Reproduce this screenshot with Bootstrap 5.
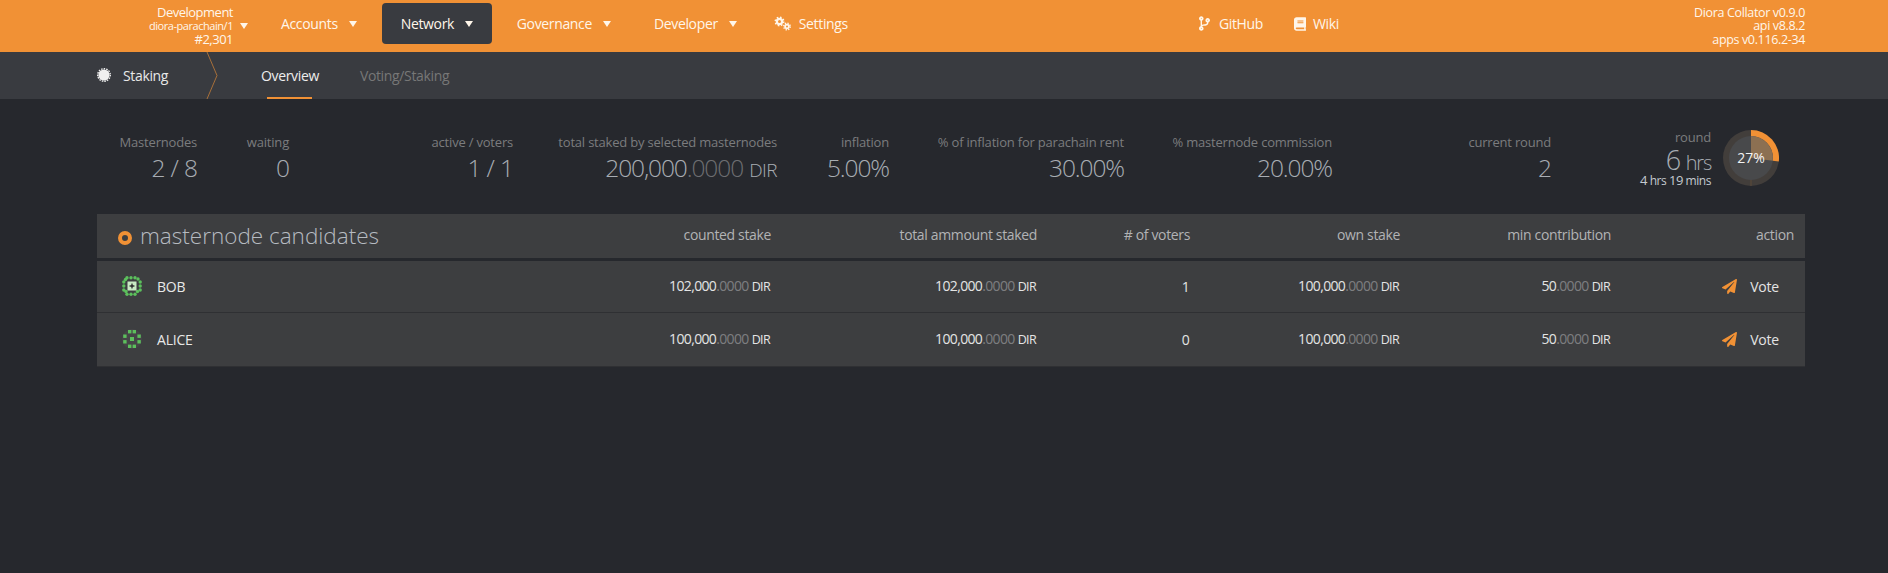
<!DOCTYPE html>
<html lang="en">
<head>
<meta charset="utf-8">
<title>Staking</title>
<link href="https://cdn.jsdelivr.net/npm/bootstrap@5.3.0/dist/css/bootstrap.min.css" rel="stylesheet">
<style>
html,body{height:573px;overflow:hidden}
body{background:#26282d;font-family:"Open Sans","Noto Sans",sans-serif;font-size:14px;color:#ddd}
.top-bar{height:52px;background:#f19135;color:#fff6ea;padding:0;flex-wrap:nowrap;justify-content:flex-start}
.chain-box{width:248px;text-align:right;line-height:13.5px;font-size:13px;letter-spacing:-.5px;padding-right:7px;flex:none}
.chain-box>div{padding-right:8px}
.chain-box .chain-mid{font-size:11px;display:flex;justify-content:flex-end;align-items:center;gap:7px;margin-right:-7px;padding-right:0;letter-spacing:-.45px}
.caret-mark{display:inline-block;border-left:4.5px solid transparent;border-right:4.5px solid transparent;border-top:6px solid currentColor;flex:none}
.menu-row{gap:0;flex:none;margin-bottom:5px}
.menu-item{height:41px;display:flex;align-items:center;color:#fff6ea;text-decoration:none;font-size:14px;letter-spacing:-.35px;border-radius:4px;white-space:nowrap}
.menu-item:hover{color:#fff}
.menu-item .caret-mark{margin-left:11px}
.m-acc{margin-left:33px;margin-right:25px}
.m-net{background:#393b40;padding:0 19px;margin-right:25px;width:110px}
.m-gov{margin-right:43px}
.m-dev{margin-right:37px}
.m-set{gap:7px}
.m-git{margin-left:351px;gap:9px}
.m-wiki{margin-left:31px;gap:7px}
.ver-box{margin-left:auto;margin-right:83px;text-align:right;font-size:12.5px;letter-spacing:-.35px;line-height:13.5px}
.sub-bar{height:47px;background:#393b40;padding-left:97px;align-items:center}
.sub-title{width:109px;gap:12px;color:#e8e8e8;font-size:14px;letter-spacing:-.35px;padding-bottom:1px}
.sub-arrow{width:12px;height:47px;flex:none}
.sub-tab{color:#777;text-decoration:none;font-size:14px;letter-spacing:-.35px;height:47px;display:flex;align-items:center;position:relative;white-space:nowrap;padding-bottom:1px}
.tab-on{color:#eee;margin-left:43px;margin-right:41px}
.tab-on::after{content:"";position:absolute;left:6px;right:7px;bottom:0;height:2px;background:#f19135}
.main-wrap{padding:0 83px 0 97px}
.stat-row{padding-top:34px;height:115px;align-items:flex-start}
.stat-box{text-align:right;flex:none;white-space:nowrap}
.stat-label{font-size:13px;letter-spacing:-.2px;color:#7b7c7e;line-height:18px}
.stat-val{font-size:24.5px;letter-spacing:-1.1px;word-spacing:1px;font-weight:300;color:#a8adb3;line-height:34px}
.stat-val small{font-size:19px;letter-spacing:-.6px;font-weight:300;color:#a8adb3}
.dim{color:#6d6e71}
.w1{width:100px}.w2{width:92px}.w3{width:224px}.w4{width:264px}.w5{width:112px}.w6{width:235px}.w7{width:208px}.w8{width:219px}.w9{width:160px}
.round-box{margin-top:-5px}
.round-box .stat-label{margin-bottom:3px}
.round-val{font-size:27px;letter-spacing:-1.2px;font-weight:300;color:#a8adb3;line-height:22px}
.round-val small{font-size:20px;font-weight:300}
.round-sub{font-size:12px;letter-spacing:-.45px;color:#c4cad0;line-height:11px;margin-top:1px}
.round-sub b{font-size:13px;font-weight:400}
.round-chart{width:56px;height:56px;margin-left:12px;margin-top:-3px;flex:none}
.stake-table{--bs-table-bg:#3d3e40;--bs-table-color:#e4e4e4;--bs-table-border-color:#2f3033;margin:0;width:1708px;table-layout:fixed;font-size:14px;letter-spacing:-.65px;border-color:#2f3033}
.stake-table th,.stake-table td{text-align:right;white-space:nowrap;vertical-align:middle;padding:0;box-shadow:none}
.stake-table thead th{height:45px;font-weight:400;color:#b2b3b5;font-size:14px;letter-spacing:-.35px;border-bottom:3px solid #26282d;padding-bottom:2px}
.stake-table tbody td{height:53px;border-bottom:1px solid #2f3033;padding-right:1px}
.stake-table tbody tr:last-child td{height:54px}
.stake-table th:last-child,.stake-table td:last-child{padding-right:11px}
.stake-table thead .cell-title{text-align:left;padding-left:21px;padding-bottom:0;font-size:22.5px;letter-spacing:0;font-weight:300;color:#b6bbc1}
.stake-table .dim{color:#7d7e80}
.stake-table .cell-name{text-align:left;padding-left:25px;letter-spacing:-.2px}
.title-dot{display:inline-block;width:14px;height:14px;border:4px solid #f19135;background:#3d3e40;border-radius:50%;margin-right:8px;vertical-align:-1px}
.name-wrap{gap:15px;color:#e8e8e8}
.dir-unit{font-size:12.5px}
.vote-wrap{gap:13px;justify-content:flex-end;padding-right:15px;letter-spacing:-.2px;color:#e4e4e4}
.stake-table col:nth-child(1){width:400px}
.stake-table col:nth-child(2){width:274px}
.stake-table col:nth-child(3){width:266px}
.stake-table col:nth-child(4){width:153px}
.stake-table col:nth-child(5){width:210px}
.stake-table col:nth-child(6){width:211px}
.stake-table col:nth-child(7){width:194px}
</style>
</head>
<body>
<nav class="navbar top-bar d-flex align-items-center">
  <div class="chain-box">
    <div>Development</div>
    <div class="chain-mid"><span>diora-parachain/1</span><span class="caret-mark"></span></div>
    <div>#2,301</div>
  </div>
  <div class="d-flex align-items-center menu-row">
    <a class="menu-item m-acc" href="#">Accounts<span class="caret-mark"></span></a>
    <a class="menu-item m-net" href="#">Network<span class="caret-mark"></span></a>
    <a class="menu-item m-gov" href="#">Governance<span class="caret-mark"></span></a>
    <a class="menu-item m-dev" href="#">Developer<span class="caret-mark"></span></a>
    <a class="menu-item m-set" href="#"><svg width="18" height="15" viewBox="0 0 18 15"><g fill="none" stroke="currentColor"><circle cx="5.5" cy="5.5" r="2.6" stroke-width="2.2"/><circle cx="5.5" cy="5.5" r="4.2" stroke-width="1.6" stroke-dasharray="1.6 1.7"/><circle cx="13" cy="10.5" r="1.9" stroke-width="1.8"/><circle cx="13" cy="10.5" r="3.3" stroke-width="1.4" stroke-dasharray="1.3 1.3"/></g></svg>Settings</a>
    <a class="menu-item m-git" href="#"><svg width="11" height="15" viewBox="0 0 384 512"><path fill="currentColor" d="M384 144c0-44.2-35.8-80-80-80s-80 35.8-80 80c0 36.4 24.3 67.1 57.5 76.8-.6 16.1-4.2 28.5-11 36.9-15.4 19.2-49.3 22.4-85.2 25.7-28.2 2.6-57.4 5.4-81.3 16.9v-144c32.5-10.2 56-40.5 56-76.3 0-44.2-35.8-80-80-80S0 35.8 0 80c0 35.8 23.5 66.1 56 76.3v199.3C23.5 365.9 0 396.2 0 432c0 44.2 35.8 80 80 80s80-35.8 80-80c0-34-21.2-63.1-51.2-74.6 3.1-5.2 7.8-9.8 14.9-13.4 16.2-8.2 40.4-10.4 66.1-12.8 42.2-3.9 90-8.4 118.2-43.4 14-17.4 21.1-39.8 21.6-67.9 31.6-10.8 54.4-40.7 54.4-75.9zM80 64c8.8 0 16 7.2 16 16s-7.2 16-16 16-16-7.2-16-16 7.2-16 16-16zm0 384c-8.8 0-16-7.2-16-16s7.2-16 16-16 16 7.2 16 16-7.2 16-16 16zm224-320c8.8 0 16 7.2 16 16s-7.2 16-16 16-16-7.2-16-16 7.2-16 16-16z"/></svg>GitHub</a>
    <a class="menu-item m-wiki" href="#"><svg width="12" height="14" viewBox="0 0 448 512"><path fill="currentColor" d="M448 360V24c0-13.3-10.7-24-24-24H96C43 0 0 43 0 96v320c0 53 43 96 96 96h328c13.3 0 24-10.7 24-24v-16c0-7.5-3.5-14.3-8.9-18.7-4.2-15.4-4.2-59.3 0-74.7 5.4-4.3 8.9-11.1 8.9-18.6zM128 134c0-3.3 2.7-6 6-6h212c3.3 0 6 2.7 6 6v20c0 3.3-2.7 6-6 6H134c-3.3 0-6-2.7-6-6v-20zm0 64c0-3.3 2.7-6 6-6h212c3.3 0 6 2.7 6 6v20c0 3.3-2.7 6-6 6H134c-3.3 0-6-2.7-6-6v-20zm253.4 250H96c-17.7 0-32-14.3-32-32 0-17.6 14.4-32 32-32h285.4c-1.9 17.1-1.9 46.9 0 64z"/></svg>Wiki</a>
  </div>
  <div class="ver-box">
    <div>Diora Collator v0.9.0</div>
    <div>api v8.8.2</div>
    <div>apps v0.116.2-34</div>
  </div>
</nav>
<div class="sub-bar d-flex">
  <div class="sub-title d-flex align-items-center"><svg width="14" height="14" viewBox="0 0 14 14"><circle cx="7" cy="7" r="5.6" fill="#f0f0f0"/><circle cx="7" cy="7" r="6.3" fill="none" stroke="#f0f0f0" stroke-width="1.4" stroke-dasharray="1.5 1.1"/></svg><span>Staking</span></div>
  <svg class="sub-arrow" viewBox="0 0 12 47"><path d="M1 0 L11 23.5 L1 47" fill="none" stroke="#a8703a" stroke-width="1"/></svg>
  <a class="sub-tab tab-on" href="#">Overview</a>
  <a class="sub-tab" href="#">Voting/Staking</a>
</div>
<div class="main-wrap">
  <div class="stat-row d-flex">
    <div class="stat-box w1"><div class="stat-label">Masternodes</div><div class="stat-val">2 / 8</div></div>
    <div class="stat-box w2"><div class="stat-label">waiting</div><div class="stat-val">0</div></div>
    <div class="stat-box w3"><div class="stat-label">active / voters</div><div class="stat-val">1 / 1</div></div>
    <div class="stat-box w4"><div class="stat-label">total staked by selected masternodes</div><div class="stat-val">200,000<span class="dim">.0000</span> <small>DIR</small></div></div>
    <div class="stat-box w5"><div class="stat-label">inflation</div><div class="stat-val">5.00%</div></div>
    <div class="stat-box w6"><div class="stat-label">% of inflation for parachain rent</div><div class="stat-val">30.00%</div></div>
    <div class="stat-box w7"><div class="stat-label">% masternode commission</div><div class="stat-val">20.00%</div></div>
    <div class="stat-box w8"><div class="stat-label">current round</div><div class="stat-val">2</div></div>
    <div class="stat-box w9 round-box"><div class="stat-label">round</div><div class="round-val">6 <small>hrs</small></div><div class="round-sub"><b>4</b> hrs <b>19</b> mins</div></div>
    <svg class="round-chart" viewBox="-28 -28 56 56">
      <circle r="28" fill="#423e3b"/>
      <path d="M0 0 L0 -28 A28 28 0 0 1 27.8 3.5 Z" fill="#f19135"/>
      <circle r="22" fill="#48494b"/>
      <path d="M0 0 L0 -22 A22 22 0 0 1 21.8 2.75 Z" fill="#8c7052"/>
      <path d="M0 22 V28" stroke="#5c4a38" stroke-width="1"/>
      <text x="0" y="5" text-anchor="middle" font-size="14" fill="#f2f2f2" font-family="Open Sans">27%</text>
    </svg>
  </div>
  <table class="table stake-table">
    <colgroup><col><col><col><col><col><col><col></colgroup>
    <thead>
      <tr>
        <th class="cell-title"><span class="title-dot"></span>masternode candidates</th>
        <th>counted stake</th><th>total ammount staked</th><th># of voters</th><th>own stake</th><th>min contribution</th><th>action</th>
      </tr>
    </thead>
    <tbody>
      <tr>
        <td class="cell-name"><div class="d-flex align-items-center name-wrap"><svg width="20" height="20" viewBox="0 0 20 20"><g fill="#5cc05c"><circle cx="1.8" cy="6" r="1.7"/><circle cx="1.8" cy="10" r="1.7"/><circle cx="1.8" cy="14" r="1.7"/><circle cx="5" cy="1.8" r="1.7"/><circle cx="9" cy="1.8" r="1.7"/><circle cx="13" cy="1.8" r="1.7"/><circle cx="16" cy="3" r="1.7"/><circle cx="18.2" cy="6" r="1.7"/><circle cx="18.2" cy="10" r="1.7"/><circle cx="18.2" cy="14" r="1.7"/><circle cx="5" cy="18.2" r="1.7"/><circle cx="9" cy="18.2" r="1.7"/><circle cx="13" cy="18.2" r="1.7"/><circle cx="15.5" cy="15.5" r="1.7"/><circle cx="4" cy="15.5" r="1.7"/><circle cx="3.5" cy="3.5" r="1.7"/></g><rect x="5.5" y="5.5" width="9" height="9" fill="#c9eac4"/><path d="M10 6.8 L10.9 9.1 L13.2 10 L10.9 10.9 L10 13.2 L9.1 10.9 L6.8 10 L9.1 9.1Z" fill="#333"/></svg><span>BOB</span></div></td>
        <td>102,000<span class="dim">.0000</span> <span class="dir-unit">DIR</span></td>
        <td>102,000<span class="dim">.0000</span> <span class="dir-unit">DIR</span></td>
        <td>1</td>
        <td>100,000<span class="dim">.0000</span> <span class="dir-unit">DIR</span></td>
        <td>50<span class="dim">.0000</span> <span class="dir-unit">DIR</span></td>
        <td><div class="d-flex align-items-center vote-wrap"><svg width="15" height="15" viewBox="0 0 512 512"><path fill="#f19135" d="M476 3.2L12.5 270.6c-18.1 10.4-15.8 35.6 2.2 43.2L121 358.4l287.3-253.2c5.5-4.9 13.3 2.6 8.6 8.3L176 407v80.5c0 23.6 28.5 32.9 42.5 15.8L282 426l124.6 52.2c14.2 6 30.4-2.9 33-18.2l72-432C515 7.8 493.3-6.8 476 3.2z"/></svg><span>Vote</span></div></td>
      </tr>
      <tr>
        <td class="cell-name"><div class="d-flex align-items-center name-wrap"><svg width="20" height="20" viewBox="0 0 20 20"><circle cx="10" cy="10" r="10" fill="#454547"/><g fill="#5cc05c"><rect x="6" y="1" width="3.4" height="3.4"/><rect x="10.6" y="1" width="3.4" height="3.4"/><rect x="1.2" y="5.5" width="3.4" height="3.4"/><rect x="15.4" y="5.5" width="3.4" height="3.4"/><rect x="1.2" y="11.1" width="3.4" height="3.4"/><rect x="15.4" y="11.1" width="3.4" height="3.4"/><rect x="6" y="15.6" width="3.4" height="3.4"/><rect x="10.6" y="15.6" width="3.4" height="3.4"/><rect x="8" y="8" width="4" height="4"/></g></svg><span>ALICE</span></div></td>
        <td>100,000<span class="dim">.0000</span> <span class="dir-unit">DIR</span></td>
        <td>100,000<span class="dim">.0000</span> <span class="dir-unit">DIR</span></td>
        <td>0</td>
        <td>100,000<span class="dim">.0000</span> <span class="dir-unit">DIR</span></td>
        <td>50<span class="dim">.0000</span> <span class="dir-unit">DIR</span></td>
        <td><div class="d-flex align-items-center vote-wrap"><svg width="15" height="15" viewBox="0 0 512 512"><path fill="#f19135" d="M476 3.2L12.5 270.6c-18.1 10.4-15.8 35.6 2.2 43.2L121 358.4l287.3-253.2c5.5-4.9 13.3 2.6 8.6 8.3L176 407v80.5c0 23.6 28.5 32.9 42.5 15.8L282 426l124.6 52.2c14.2 6 30.4-2.9 33-18.2l72-432C515 7.8 493.3-6.8 476 3.2z"/></svg><span>Vote</span></div></td>
      </tr>
    </tbody>
  </table>
</div>
</body>
</html>
